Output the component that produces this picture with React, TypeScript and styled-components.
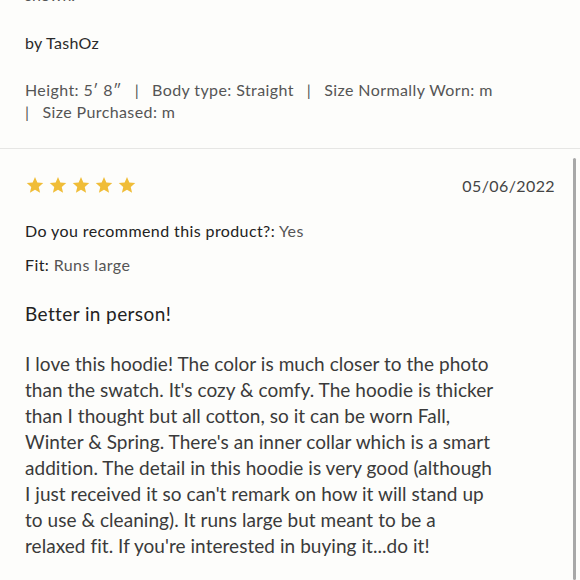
import React from 'react'
import styled, { createGlobalStyle } from 'styled-components'

const GlobalStyle = createGlobalStyle`
  html, body {
    margin: 0;
    padding: 0;
    background: #fdfdfb;
    overflow: hidden;
  }
  body {
    font-family: Lato, "Open Sans", sans-serif;
    color: #333;
  }
`

const Page = styled.div`
  position: relative;
  width: 580px;
  height: 580px;
  overflow: hidden;
  background: #fdfdfb;
`

const Scroller = styled.div`
  margin-top: -16px;
`

const Section = styled.div<{ $border?: boolean }>`
  padding: 0 25px 0 25px;
  border-bottom: ${(p) => (p.$border ? '1.5px solid #e6e6e4' : 'none')};
`

const Faded = styled.p`
  margin: 0;
  font-size: 16px;
  line-height: 22px;
  color: #555;
`

const Author = styled.p`
  margin: 26px 0 0;
  font-size: 16px;
  line-height: 22px;
  color: #2a2a2a;
  letter-spacing: 0.3px;
`

const Attrs = styled.p`
  margin: 25px 0 25px;
  font-size: 16px;
  line-height: 22px;
  color: #555;
  letter-spacing: 0.4px;
`

const Sep = styled.span`
  margin: 0 13px;
`

const Head = styled.div`
  display: flex;
  justify-content: space-between;
  align-items: center;
  margin-top: 25px;
  height: 22px;
`

const Stars = styled.div`
  display: flex;
  gap: 3px;
`

const Date = styled.span`
  font-size: 16px;
  color: #444;
  letter-spacing: 0.4px;
`

const Meta = styled.p`
  margin: 0;
  font-size: 16px;
  line-height: 22px;
  color: #555;
  letter-spacing: 0.4px;
  b {
    font-weight: 400;
    color: #222;
  }
`

const Title = styled.h3`
  margin: 25px 0 0;
  font-size: 19px;
  font-weight: 400;
  line-height: 26px;
  color: #222;
  letter-spacing: 0.4px;
`

const Body = styled.p`
  margin: 24px 0 0;
  font-size: 19px;
  line-height: 26px;
  color: #3a3a3a;
  letter-spacing: 0.05px;
  white-space: nowrap;
`

const ScrollThumb = styled.div`
  position: absolute;
  right: 4px;
  top: 158px;
  bottom: 0;
  width: 3px;
  border-radius: 2px;
  background: #a8a8a8;
`

const reviewLines = [
  'I love this hoodie! The color is much closer to the photo',
  "than the swatch. It's cozy & comfy. The hoodie is thicker",
  'than I thought but all cotton, so it can be worn Fall,',
  "Winter & Spring. There's an inner collar which is a smart",
  'addition. The detail in this hoodie is very good (although',
  "I just received it so can't remark on how it will stand up",
  'to use & cleaning). It runs large but meant to be a',
  "relaxed fit. If you're interested in buying it...do it!",
]

const Star = () => (
  <svg width="20" height="20" viewBox="0 0 24 24">
    <path
      d="M12 2.5l2.8 6.6 7.1.6-5.4 4.7 1.6 7-6.1-3.7-6.1 3.7 1.6-7-5.4-4.7 7.1-.6z"
      fill="#f0bd38"
    />
  </svg>
)

export default function App() {
  return (
    <Page>
      <GlobalStyle />
      <Scroller>
        <Section $border>
          <Faded>shown.</Faded>
          <Author>by TashOz</Author>
          <Attrs>
            Height: 5′ 8″<Sep>|</Sep>Body type: Straight<Sep>|</Sep>Size Normally Worn: m
            <br />|<Sep style={{ marginRight: 0 }} />Size Purchased: m
          </Attrs>
        </Section>
        <Section>
          <Head>
            <Stars>
              {[0, 1, 2, 3, 4].map((i) => (
                <Star key={i} />
              ))}
            </Stars>
            <Date>05/06/2022</Date>
          </Head>
          <Meta style={{ marginTop: 24 }}>
            <b>Do you recommend this product?:</b> Yes
          </Meta>
          <Meta style={{ marginTop: 12 }}>
            <b>Fit:</b> Runs large
          </Meta>
          <Title>Better in person!</Title>
          <Body>
            {reviewLines.map((line, i) => (
              <React.Fragment key={i}>
                {line}
                {i < reviewLines.length - 1 && ' '}
                {i < reviewLines.length - 1 && <br />}
              </React.Fragment>
            ))}
          </Body>
        </Section>
      </Scroller>
      <ScrollThumb />
    </Page>
  )
}
